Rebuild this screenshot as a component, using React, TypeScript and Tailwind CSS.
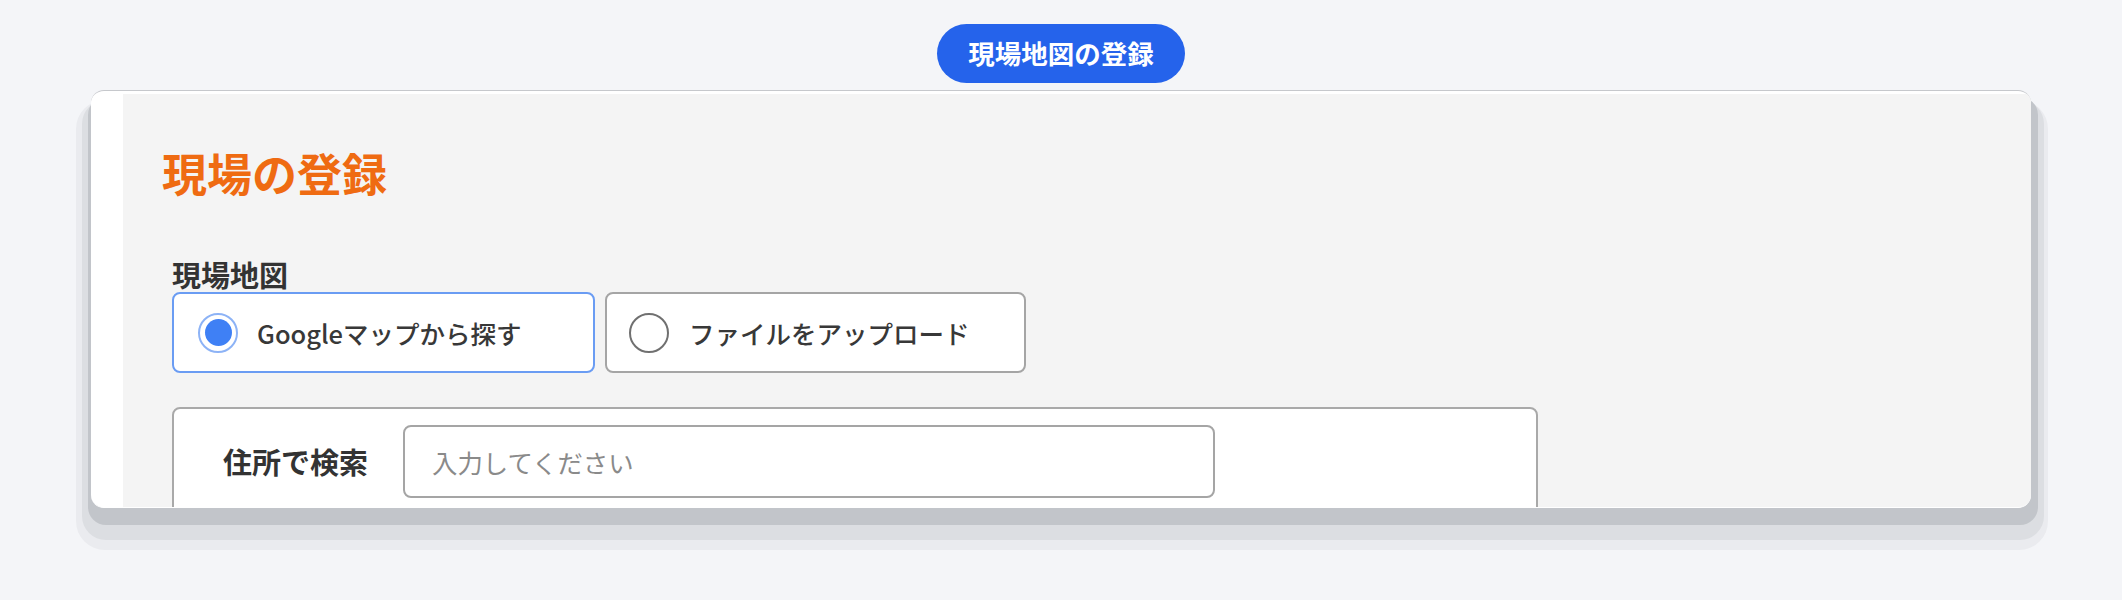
export default function App() {
  return (
    <div className="min-h-[600px] w-full bg-[#f4f5f8] pt-[24px] font-['Noto_Sans_CJK_JP','Noto_Sans',sans-serif]">
      {/* step tag */}
      <div className="flex justify-center">
        <div className="flex h-[59px] w-[248px] items-center justify-center rounded-full bg-[#2563eb] text-[26.5px] font-bold leading-none text-white">
          現場地図の登録
        </div>
      </div>

      {/* card, cut off at the bottom */}
      <div className="mx-auto mt-[7px] h-[418px] w-[1940px] overflow-hidden rounded-[13px] border-t border-b border-t-[#c6c8cc] border-b-white bg-white pl-[32px] pt-[3px] shadow-[2px_12px_0_5px_#c2c5ca,2px_21px_0_11px_#dcdee2,1px_26px_0_16px_#eaebef]">
        <div className="bg-[#f4f4f4] pl-[49px] pt-[56px] pb-[60px]">
          <h1 className="-ml-[10px] text-[45px] font-bold leading-none text-[#ef6b12]">現場の登録</h1>

          <div className="mt-[65px] text-[29px] font-bold leading-none text-[#333333]">現場地図</div>

          <div className="mt-[3px] flex gap-[10px]">
            <label className="flex h-[81px] w-[423px] items-center gap-[19px] rounded-[8px] border-2 border-[#6a9cf3] bg-white pl-[24px]">
              <span className="flex h-[40px] w-[40px] items-center justify-center rounded-full border-2 border-[#8db3f6] bg-white">
                <span className="h-[27px] w-[27px] rounded-full bg-[#3f80f5]" />
              </span>
              <span className="text-[25.5px] font-medium leading-none text-[#383838]">Googleマップから探す</span>
            </label>
            <label className="flex h-[81px] w-[421px] items-center gap-[20px] rounded-[8px] border-2 border-[#a5a5a5] bg-white pl-[22px]">
              <span className="h-[40px] w-[40px] rounded-full border-2 border-[#707070] bg-white" />
              <span className="text-[25.5px] font-medium leading-none text-[#383838]">ファイルをアップロード</span>
            </label>
          </div>

          <div className="mt-[34px] w-[1366px] rounded-[8px] border-2 border-[#a9a9a9] bg-white pb-[40px] pl-[49px] pt-[16px]">
            <div className="flex items-center gap-[35px]">
              <span className="text-[29px] font-bold leading-none text-[#333333]">住所で検索</span>
              <input
                type="text"
                placeholder="入力してください"
                className="h-[73px] w-[812px] rounded-[8px] border-2 border-[#a5a5a5] bg-white pl-[27px] text-[25.4px] text-[#333333] outline-none placeholder:text-[#8a8a8a]"
              />
            </div>
          </div>
        </div>
      </div>
    </div>
  )
}
